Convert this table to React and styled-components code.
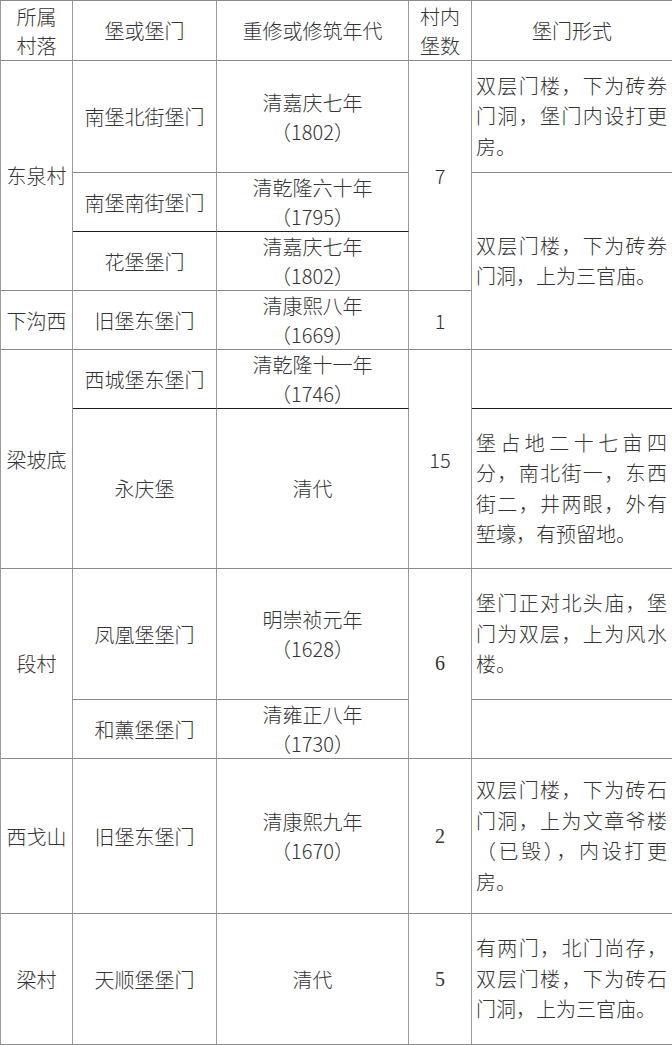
import styled, { createGlobalStyle } from "styled-components";

const GlobalStyle = createGlobalStyle`
    html, body {
        margin: 0;
        padding: 0;
        background: #ffffff;
    }
    body {
        font-family: "Noto Sans CJK SC", "Noto Sans", sans-serif;
        color: #333333;
    }
`;

const App = () => {
    return (
        <>
            <GlobalStyle />
            <Table>
                <colgroup>
                    <col style={{ width: 72 }} />
                    <col style={{ width: 144 }} />
                    <col style={{ width: 192 }} />
                    <col style={{ width: 63 }} />
                    <col style={{ width: 201 }} />
                </colgroup>
                <tbody>
                    <Row $h={60}>
                        <Cell>
                            所属
                            <br />
                            村落
                        </Cell>
                        <Cell>堡或堡门</Cell>
                        <Cell>重修或修筑年代</Cell>
                        <Cell>
                            村内
                            <br />
                            堡数
                        </Cell>
                        <Cell>堡门形式</Cell>
                    </Row>

                    <Row $h={112}>
                        <Cell rowSpan={3}>东泉村</Cell>
                        <Cell>南堡北街堡门</Cell>
                        <Cell>
                            清嘉庆七年
                            <br />
                            （1802）
                        </Cell>
                        <Cell rowSpan={3}>7</Cell>
                        <Desc>双层门楼，下为砖券门洞，堡门内设打更房。</Desc>
                    </Row>
                    <Row $h={59}>
                        <Cell $dark>南堡南街堡门</Cell>
                        <Cell $dark>
                            清乾隆六十年
                            <br />
                            （1795）
                        </Cell>
                        <Desc rowSpan={3}>双层门楼，下为砖券门洞，上为三官庙。</Desc>
                    </Row>
                    <Row $h={59}>
                        <Cell>花堡堡门</Cell>
                        <Cell>
                            清嘉庆七年
                            <br />
                            （1802）
                        </Cell>
                    </Row>

                    <Row $h={59}>
                        <Cell>下沟西</Cell>
                        <Cell>旧堡东堡门</Cell>
                        <Cell>
                            清康熙八年
                            <br />
                            （1669）
                        </Cell>
                        <Cell>1</Cell>
                    </Row>

                    <Row $h={59}>
                        <Cell rowSpan={2}>梁坡底</Cell>
                        <Cell $dark>西城堡东堡门</Cell>
                        <Cell $dark>
                            清乾隆十一年
                            <br />
                            （1746）
                        </Cell>
                        <Cell rowSpan={2}>15</Cell>
                        <Desc $dark />
                    </Row>
                    <Row $h={160}>
                        <Cell>永庆堡</Cell>
                        <Cell>清代</Cell>
                        <Desc>
                            堡占地二十七亩四分，南北街一，东西街二，井两眼，外有堑壕，有预留地。
                        </Desc>
                    </Row>

                    <Row $h={131}>
                        <Cell rowSpan={2}>段村</Cell>
                        <Cell>凤凰堡堡门</Cell>
                        <Cell>
                            明崇祯元年
                            <br />
                            （1628）
                        </Cell>
                        <Cell rowSpan={2} $serif>
                            6
                        </Cell>
                        <Desc>堡门正对北头庙，堡门为双层，上为风水楼。</Desc>
                    </Row>
                    <Row $h={59}>
                        <Cell>和薰堡堡门</Cell>
                        <Cell>
                            清雍正八年
                            <br />
                            （1730）
                        </Cell>
                        <Desc />
                    </Row>

                    <Row $h={155}>
                        <Cell>西戈山</Cell>
                        <Cell>旧堡东堡门</Cell>
                        <Cell>
                            清康熙九年
                            <br />
                            （1670）
                        </Cell>
                        <Cell $serif>2</Cell>
                        <Desc>
                            双层门楼，下为砖石门洞，上为文章爷楼（已毁），内设打更房。
                        </Desc>
                    </Row>

                    <Row $h={131}>
                        <Cell>梁村</Cell>
                        <Cell>天顺堡堡门</Cell>
                        <Cell>清代</Cell>
                        <Cell $serif>5</Cell>
                        <Desc>有两门，北门尚存，双层门楼，下为砖石门洞，上为三官庙。</Desc>
                    </Row>
                </tbody>
            </Table>
        </>
    );
};

const Table = styled.table`
    width: 672px;
    table-layout: fixed;
    border-collapse: separate;
    border-spacing: 0;
    border-top: 1px solid #8a8a8a;
    border-left: 1px solid #9a9a9a;
`;

const Row = styled.tr`
    height: ${(p) => p.$h}px;
`;

const Cell = styled.td`
    padding: 0;
    text-align: center;
    vertical-align: middle;
    font-size: 20px;
    font-weight: 300;
    line-height: 29px;
    font-family: ${(p) =>
        p.$serif
            ? '"Liberation Serif", "Noto Sans CJK SC", serif'
            : '"Noto Sans CJK SC", "Noto Sans", sans-serif'};
    border-right: 1px solid #9a9a9a;
    border-bottom: 1px solid ${(p) => (p.$dark ? "#1c1c1c" : "#8a8a8a")};
`;

const Desc = styled(Cell)`
    padding: 0 5px 0 4px;
    text-align: justify;
    line-height: 30.5px;
`;

export default App;
